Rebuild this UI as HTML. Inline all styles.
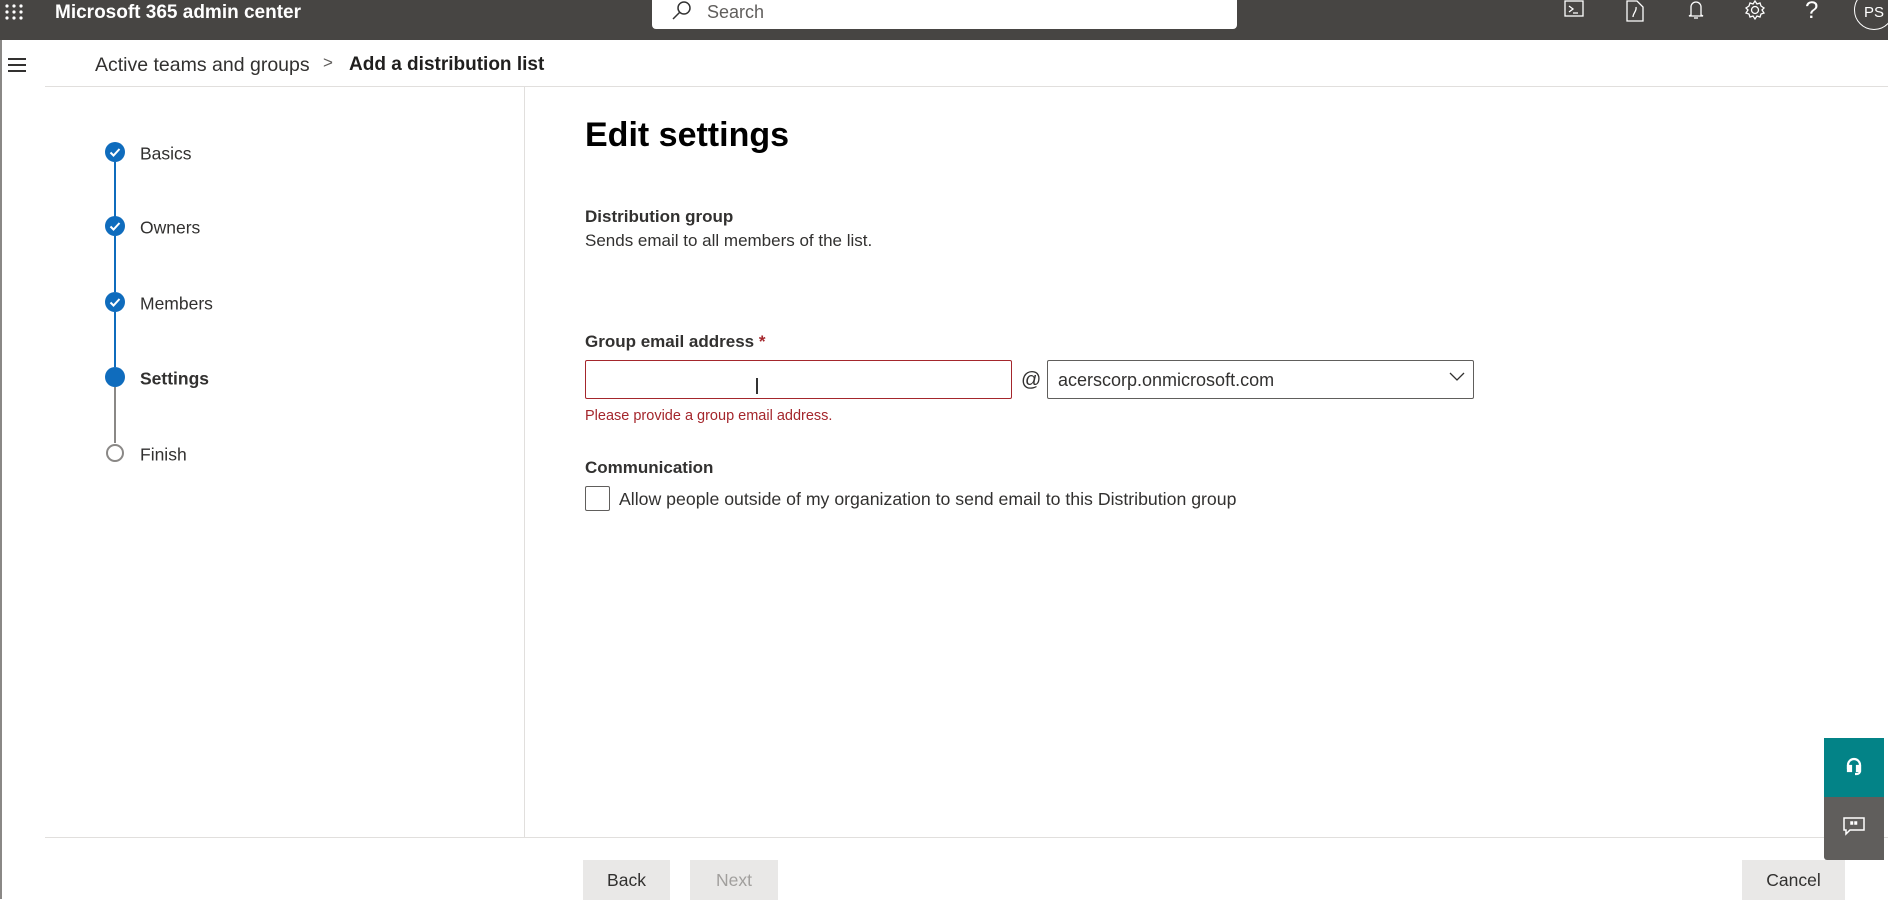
<!DOCTYPE html>
<html><head><meta charset="utf-8"><style>
*{margin:0;padding:0;box-sizing:border-box}
body{width:1888px;height:899px;overflow:hidden;background:#fff;font-family:"Liberation Sans",sans-serif;color:#323130;position:relative}
.a{position:absolute}
.hdr{left:0;top:0;width:1888px;height:40px;background:#474543}
.t{white-space:nowrap}
.step{left:105px;width:20px;height:20px;border-radius:50%;background:#0f6cbd}
.line{left:114px;width:2px}
.lbl{left:140px;font-size:17.5px;color:#323130;transform:translateY(-50%)}
.btn{background:#e9e8e7;font-size:17.5px;text-align:center;line-height:40px}
</style></head><body>
<div class="a hdr"></div>
<svg class="a" style="left:4px;top:3px" width="22" height="18" viewBox="0 0 22 18"><g fill="#fff"><circle cx="3" cy="3" r="1.6"/><circle cx="10" cy="3" r="1.6"/><circle cx="17" cy="3" r="1.6"/><circle cx="3" cy="9" r="1.6"/><circle cx="10" cy="9" r="1.6"/><circle cx="17" cy="9" r="1.6"/><circle cx="3" cy="15" r="1.6"/><circle cx="10" cy="15" r="1.6"/><circle cx="17" cy="15" r="1.6"/></g></svg>
<div class="a t" style="left:55px;top:1px;color:#fff;font-size:19px;font-weight:bold;line-height:24px">Microsoft 365 admin center</div>
<div class="a" style="left:652px;top:0;width:585px;height:29px;background:#fff;border-radius:0 0 4px 4px"></div>
<svg class="a" style="left:670px;top:0" width="22" height="22" viewBox="0 0 22 22"><circle cx="14" cy="8" r="6" fill="none" stroke="#333" stroke-width="1.5"/><path d="M10 12 L3 19" stroke="#333" stroke-width="1.5"/></svg>
<div class="a t" style="left:707px;top:2px;font-size:18px;color:#605e5c">Search</div>
<svg class="a" style="left:1564px;top:0" width="20" height="20" viewBox="0 0 20 20" fill="none" stroke="#fff" stroke-width="1.3"><rect x="1" y="1" width="18" height="15"/><path d="M5 6l4 3-4 3M9 13h5"/></svg>
<svg class="a" style="left:1625px;top:0" width="20" height="22" viewBox="0 0 20 22" fill="none" stroke="#fff" stroke-width="1.3"><path d="M2 1h10l6 6v14H2z"/><path d="M8 17c0-4 4-6 3-10"/></svg>
<svg class="a" style="left:1686px;top:0" width="20" height="20" viewBox="0 0 20 20" fill="none" stroke="#fff" stroke-width="1.3"><path d="M5 15V7a5 5 0 0110 0v8l2 1H3z"/><path d="M8 18h4"/></svg>
<svg class="a" style="left:1744px;top:0" width="22" height="22" viewBox="0 0 22 22" fill="none" stroke="#fff" stroke-width="1.3"><circle cx="11" cy="10" r="3.5"/><path d="M11 1l2 3 3-1 1 3 3 2-2 2 2 3-3 1-1 3-3-1-2 3-2-3-3 1-1-3-3-1 2-3-2-2 3-2 1-3 3 1z"/></svg>
<div class="a t" style="left:1805px;top:-3px;color:#fff;font-size:24px;font-weight:300">?</div>
<div class="a" style="left:1854px;top:-10px;width:40px;height:40px;border:1.3px solid #fff;border-radius:50%"></div>
<div class="a t" style="left:1864px;top:4px;color:#fff;font-size:15px">PS</div>
<div class="a" style="left:0;top:40px;width:2px;height:859px;background:#8a8886"></div>
<div class="a" style="left:8px;top:58px;width:18px;height:1.5px;background:#323130"></div>
<div class="a" style="left:8px;top:64px;width:18px;height:1.5px;background:#323130"></div>
<div class="a" style="left:8px;top:70px;width:18px;height:1.5px;background:#323130"></div>
<div class="a t" style="left:95px;top:54px;font-size:19.5px;color:#323130">Active teams and groups</div>
<div class="a t" style="left:323px;top:53px;font-size:17px;color:#605e5c">&gt;</div>
<div class="a t" style="left:349px;top:54px;font-size:19px;font-weight:bold;color:#201f1e">Add a distribution list</div>
<div class="a" style="left:45px;top:86px;width:1843px;height:1px;background:#e1dfdd"></div>
<div class="a" style="left:524px;top:87px;width:1px;height:750px;background:#e1dfdd"></div>
<div class="a" style="left:45px;top:837px;width:1843px;height:1px;background:#e1dfdd"></div>
<div class="a line" style="top:162px;height:55px;background:#0f6cbd"></div>
<div class="a line" style="top:236px;height:56px;background:#0f6cbd"></div>
<div class="a line" style="top:312px;height:55px;background:#0f6cbd"></div>
<div class="a line" style="top:387px;height:56px;background:#8a8886"></div>
<svg class="a" style="left:105px;top:142px" width="20" height="20"><circle cx="10" cy="10" r="10" fill="#0f6cbd"/><path d="M5.5 10.5l3 3 6-6.5" stroke="#fff" stroke-width="2" fill="none"/></svg>
<svg class="a" style="left:105px;top:216px" width="20" height="20"><circle cx="10" cy="10" r="10" fill="#0f6cbd"/><path d="M5.5 10.5l3 3 6-6.5" stroke="#fff" stroke-width="2" fill="none"/></svg>
<svg class="a" style="left:105px;top:292px" width="20" height="20"><circle cx="10" cy="10" r="10" fill="#0f6cbd"/><path d="M5.5 10.5l3 3 6-6.5" stroke="#fff" stroke-width="2" fill="none"/></svg>
<div class="a step" style="top:367px"></div>
<div class="a" style="left:106px;top:444px;width:18px;height:18px;border-radius:50%;border:2px solid #8a8886;background:#fff"></div>
<div class="a lbl t" style="top:154px">Basics</div>
<div class="a lbl t" style="top:228px">Owners</div>
<div class="a lbl t" style="top:304px">Members</div>
<div class="a lbl t" style="top:379px;font-weight:bold">Settings</div>
<div class="a lbl t" style="top:455px">Finish</div>
<div class="a t" style="left:585px;top:116px;font-size:34px;font-weight:bold;color:#000">Edit settings</div>
<div class="a t" style="left:585px;top:207px;font-size:17px;font-weight:bold">Distribution group</div>
<div class="a t" style="left:585px;top:231px;font-size:17px">Sends email to all members of the list.</div>
<div class="a t" style="left:585px;top:332px;font-size:17px;font-weight:bold">Group email address <span style="color:#a4262c">*</span></div>
<div class="a" style="left:585px;top:360px;width:427px;height:39px;border:1px solid #a4262c;border-radius:2px"></div>
<div class="a" style="left:756px;top:378px;width:1.5px;height:16px;background:#333"></div>
<div class="a t" style="left:1021px;top:369px;font-size:20px;color:#323130">@</div>
<div class="a" style="left:1047px;top:360px;width:427px;height:39px;border:1px solid #605e5c;border-radius:2px"></div>
<div class="a t" style="left:1058px;top:370px;font-size:18px">acerscorp.onmicrosoft.com</div>
<svg class="a" style="left:1449px;top:372px" width="16" height="10"><path d="M1 1l7 7 7-7" stroke="#323130" stroke-width="1.3" fill="none"/></svg>
<div class="a t" style="left:585px;top:408px;font-size:14.5px;color:#a4262c">Please provide a group email address.</div>
<div class="a t" style="left:585px;top:458px;font-size:17px;font-weight:bold">Communication</div>
<div class="a" style="left:585px;top:486px;width:25px;height:25px;border:1px solid #605e5c;border-radius:2px"></div>
<div class="a t" style="left:619px;top:489px;font-size:17.7px">Allow people outside of my organization to send email to this Distribution group</div>
<div class="a btn" style="left:583px;top:860px;width:87px;height:40px;color:#323130">Back</div>
<div class="a btn" style="left:690px;top:860px;width:88px;height:40px;color:#a19f9d">Next</div>
<div class="a btn" style="left:1742px;top:860px;width:103px;height:40px;color:#323130">Cancel</div>
<div class="a" style="left:1824px;top:738px;width:60px;height:59px;background:#038387"></div>
<svg class="a" style="left:1844px;top:756px" width="20" height="22" viewBox="0 0 20 22" fill="none" stroke="#fff" stroke-width="2.2"><path d="M4 13V9a6 6 0 0112 0v4"/><path d="M16 13v2a3 3 0 01-3 3h-2"/><rect x="4" y="10" width="3" height="5" fill="#fff"/><rect x="13" y="10" width="3" height="5" fill="#fff"/></svg>
<div class="a" style="left:1824px;top:797px;width:60px;height:63px;background:#605e5c;border-radius:0 0 0 3px"></div>
<svg class="a" style="left:1843px;top:817px" width="22" height="20" viewBox="0 0 22 20" fill="none" stroke="#fff" stroke-width="1.5"><path d="M1 1h20v12H7l-4 4v-4H1z"/><rect x="8" y="5" width="1.5" height="2" fill="#fff"/><rect x="12" y="5" width="1.5" height="2" fill="#fff"/></svg>
</body></html>
